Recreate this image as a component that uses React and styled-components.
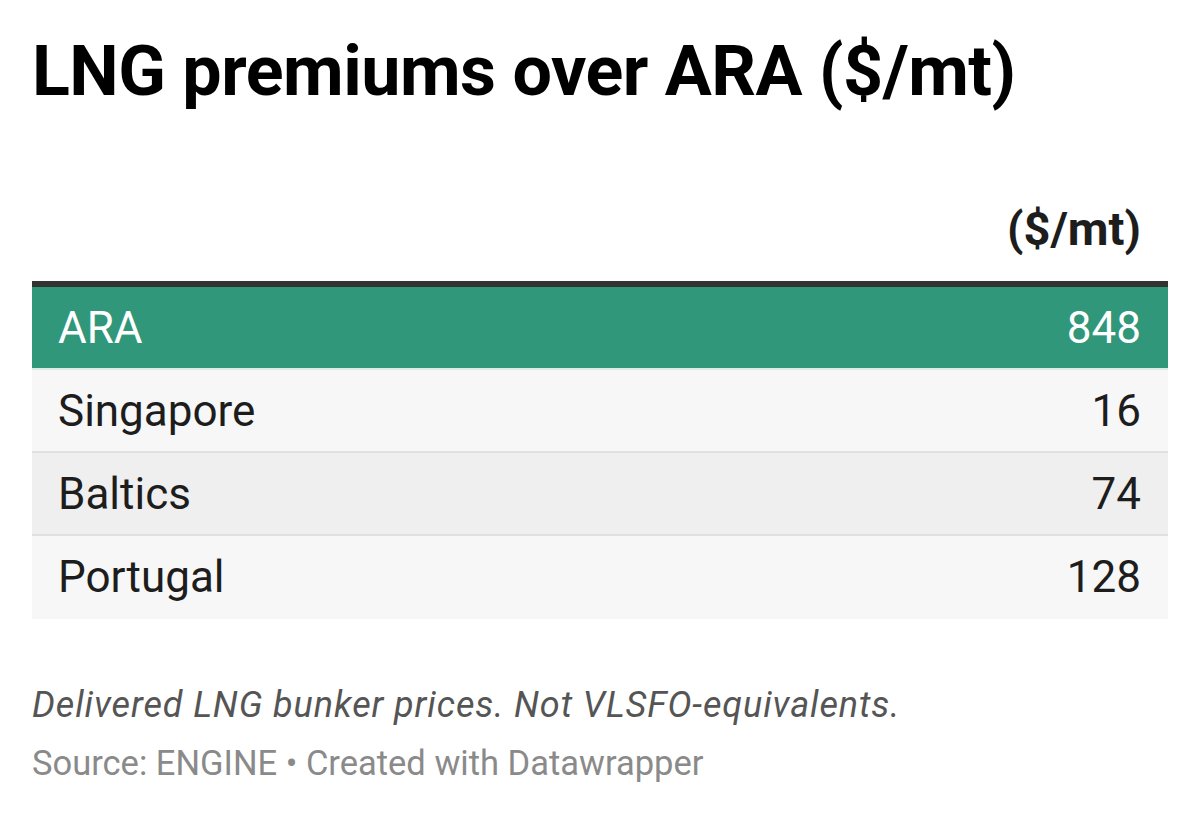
import React from 'react'
import styled, { createGlobalStyle } from 'styled-components'

const GlobalStyle = createGlobalStyle`
    body {
        margin: 0;
        background: #ffffff;
        font-family: Roboto, "Liberation Sans", sans-serif;
    }
`

const Page = styled.div`
    width: 1200px;
    height: 816px;
    box-sizing: border-box;
    padding: 29px 32px 0 32px;
    background: #ffffff;
`

const Title = styled.h1`
    margin: 0;
    font-size: 70px;
    font-weight: 700;
    line-height: 84px;
    color: #000000;
    letter-spacing: -0.5px;
`

const Table = styled.div`
    margin-top: 88px;
    width: 1136px;
`

const HeadRow = styled.div`
    display: flex;
    justify-content: flex-end;
    padding: 0 27px 24px 27px;
    border-bottom: 6px solid #333333;
`

const HeadCell = styled.div`
    font-size: 47px;
    font-weight: 700;
    line-height: 56px;
    color: #1d1d1d;
`

const Row = styled.div`
    display: flex;
    align-items: center;
    justify-content: space-between;
    height: 81px;
    padding: 0 27px 0 26px;
    font-size: 44px;
    color: ${({ $highlight }) => ($highlight ? '#ffffff' : '#1d1d1d')};
    background: ${({ $highlight, $odd }) =>
        $highlight ? '#30977a' : $odd ? '#efefef' : '#f7f7f7'};
    border-bottom: 2px solid ${({ $highlight, $last }) =>
        $highlight ? '#dcebe6' : $last ? 'transparent' : '#e0e0e0'};
`

const Cell = styled.span`
    line-height: 1;
`

const Notes = styled.div`
    margin-top: 64px;
    font-size: 36px;
    font-style: italic;
    letter-spacing: 0.9px;
    color: #555555;
    line-height: 44px;
`

const Source = styled.div`
    margin-top: 14px;
    font-size: 34.5px;
    color: #8a8a8a;
    line-height: 44px;
`

const rows = [
    { name: 'ARA', value: 848, highlight: true },
    { name: 'Singapore', value: 16 },
    { name: 'Baltics', value: 74 },
    { name: 'Portugal', value: 128 },
]

const App = () => {
    return (
        <Page>
            <GlobalStyle />
            <Title>LNG premiums over ARA ($/mt)</Title>
            <Table>
                <HeadRow>
                    <HeadCell>($/mt)</HeadCell>
                </HeadRow>
                {rows.map((r, i) => (
                    <Row
                        key={r.name}
                        $highlight={r.highlight}
                        $odd={i === 2}
                        $last={i === rows.length - 1}
                    >
                        <Cell>{r.name}</Cell>
                        <Cell>{r.value}</Cell>
                    </Row>
                ))}
            </Table>
            <Notes>Delivered LNG bunker prices. Not VLSFO-equivalents.</Notes>
            <Source>Source: ENGINE • Created with Datawrapper</Source>
        </Page>
    )
}

export default App
